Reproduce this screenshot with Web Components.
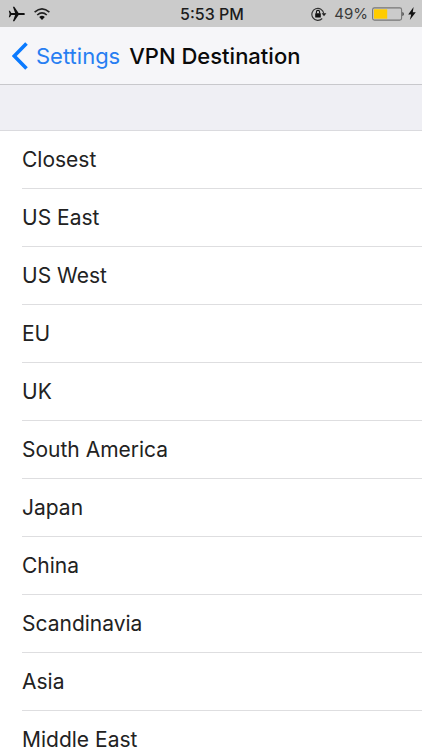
<!DOCTYPE html>
<html lang="en">
<head>
<meta charset="utf-8">
<meta name="viewport" content="width=device-width, initial-scale=1">
<title>VPN Destination</title>
<style>
  body { margin: 0; font-family: Inter, "Liberation Sans", sans-serif; background: #fff; color: #222; }
</style>
</head>
<body>
<vpn-screen></vpn-screen>

<script>
const define = (name, html, setup) => {
  const template = document.createElement('template');
  template.innerHTML = html;
  customElements.define(name, class extends HTMLElement {
    constructor() {
      super();
      this.attachShadow({ mode: 'open' }).append(template.content.cloneNode(true));
    }
    connectedCallback() { if (setup) setup(this); }
  });
};

define('status-bar', `
<style>
  :host { display: grid; grid-template-columns: 1fr auto 1fr; align-items: center; height: 27px;
    padding: 0 6px 0 8px; background: #cbcbcb; color: #1c1c1c; font-size: 16px; line-height: 20px; flex: none; }
  div { display: flex; align-items: center; }
  svg { display: block; flex: none; }
  .left { gap: 9px; }
  .right { justify-content: flex-end; gap: 4px; color: #3a3a3a; font-size: 15px; }
  .lock { margin-right: 3px; }
  time { font-weight: 500; }
</style>
<div class="left">
  <svg width="17" height="16" viewBox="0 0 17 16" role="img" aria-label="Airplane mode">
    <path fill="#111" d="M17 8c0-.7-.8-1.1-1.8-1.1h-4.600L6.300.8H4.900l2.200 6.100H3.300L1.900 4.800H.8L1.600 8l-.8 3.200h1.100l1.400-2.100h3.800L4.900 15.200h1.400l4.300-6.100h4.600C16.200 9.100 17 8.700 17 8z"/>
  </svg>
  <svg width="16" height="12" viewBox="0 0 16 12" role="img" aria-label="Wi-Fi">
    <g fill="none" stroke="#222" stroke-width="1.600">
      <path d="M.6 4.200Q8-2.500 15.400 4.200"/><path d="M3.200 7Q8 2.700 12.800 7"/>
    </g>
    <path fill="#111" d="M5.200 9Q8 6.700 10.800 9L8 11.900z"/>
  </svg>
</div>
<time>5:53 PM</time>
<div class="right">
  <svg class="lock" width="16" height="14" viewBox="0 0 16 14" role="img" aria-label="Rotation locked">
    <path d="M11.200 11.500A6 6 0 1 1 12.800 6.500" fill="none" stroke="#333" stroke-width="1.100"/>
    <path d="M10.600 6.300h4.800L13 9.300z" fill="#222"/>
    <rect x="4.200" y="6.200" width="5.600" height="4.300" rx=".5" fill="#111"/>
    <path d="M5.400 6.500V5a1.600 1.600 0 0 1 3.200 0v1.500" fill="none" stroke="#111" stroke-width="1.100"/>
  </svg>
  <span>49%</span>
  <svg width="32" height="14" viewBox="0 0 32 14" role="img" aria-label="Battery charging">
    <rect x=".6" y=".9" width="29" height="12.200" rx="1.800" fill="none" stroke="#777" stroke-width="1.100"/>
    <rect x="2" y="2.300" width="13.200" height="9.400" fill="#fc0"/>
    <path d="M30.400 4.900c1.900.3 1.900 3.900 0 4.200z" fill="#444"/>
  </svg>
  <svg width="8" height="13" viewBox="0 0 8 12" preserveAspectRatio="none" aria-hidden="true">
    <path d="M5.600 0L.2 6.900h3L1.800 12l6-7.200h-3z" fill="#111"/>
  </svg>
</div>`);

define('nav-bar', `
<style>
  :host { display: flex; align-items: center; gap: 9px; height: 57px; padding: 0 12px; flex: none;
    background: #f6f6f9; border-bottom: 1px solid #c8c8cc; }
  button { display: flex; align-items: center; gap: 8px; padding: 0; border: 0; background: none;
    color: #277ef2; font: inherit; font-size: 22px; line-height: 28px; cursor: pointer; }
  svg { display: block; }
  h1 { margin: 0; color: #0a0a0a; font-size: 22px; line-height: 28px; font-weight: 500; white-space: nowrap; }
</style>
<button type="button">
  <svg width="16" height="28" viewBox="0 0 16 28" aria-hidden="true">
    <path d="M14.500 1.500L2.200 14l12.300 12.500" fill="none" stroke="#0a7aff" stroke-width="3.600"/>
  </svg>
  <slot name="back"></slot>
</button>
<h1><slot></slot></h1>`);

define('option-list', `
<style>
  :host { display: block; flex: 1; min-height: 0; overflow-y: auto; scrollbar-width: none; background: #fff; }
  .band { height: 45px; background: #efeff4; border-bottom: 1px solid #dadade; }
</style>
<div class="band"></div>
<div role="list"><slot></slot></div>`);

define('option-row', `
<style>
  :host { display: block; padding-left: 22px; }
  button { display: block; width: 100%; height: 58px; padding: 0; border: 0; border-bottom: 1px solid #dedee0;
    background: none; color: #222; font: inherit; font-size: 21px; line-height: 20px; text-align: left; cursor: pointer; }
</style>
<button type="button"><slot></slot></button>`, el => el.setAttribute('role', 'listitem'));

define('vpn-screen', `
<style>:host { display: flex; flex-direction: column; height: 100vh; }</style>
<status-bar></status-bar>
<nav-bar><span slot="back">Settings</span>VPN Destination</nav-bar>
<option-list>
  <option-row>Closest</option-row>
  <option-row>US East</option-row>
  <option-row>US West</option-row>
  <option-row>EU</option-row>
  <option-row>UK</option-row>
  <option-row>South America</option-row>
  <option-row>Japan</option-row>
  <option-row>China</option-row>
  <option-row>Scandinavia</option-row>
  <option-row>Asia</option-row>
  <option-row>Middle East</option-row>
</option-list>`);
</script>
</body>
</html>
